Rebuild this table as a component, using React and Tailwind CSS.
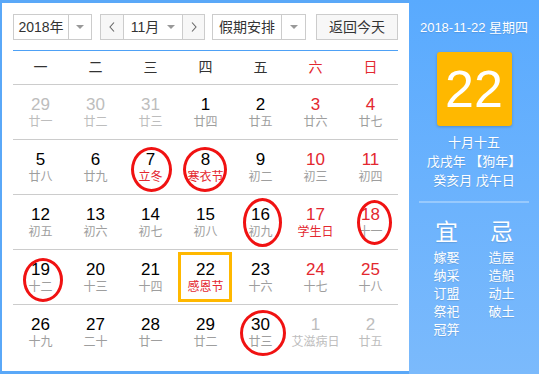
import React from 'react';

const WEEKDAYS = ['一', '二', '三', '四', '五', '六', '日'];

// o: other month, h: festival text, t: today, c: ring annotation {l,t,w,h}
const WEEKS = [
  [
    { d: 29, l: '廿一', o: true },
    { d: 30, l: '廿二', o: true },
    { d: 31, l: '廿三', o: true },
    { d: 1, l: '廿四' },
    { d: 2, l: '廿五' },
    { d: 3, l: '廿六' },
    { d: 4, l: '廿七' },
  ],
  [
    { d: 5, l: '廿八' },
    { d: 6, l: '廿九' },
    { d: 7, l: '立冬', h: true, c: { l: 8, t: 7, w: 41, h: 45 } },
    { d: 8, l: '寒衣节', h: true, c: { l: 5, t: 7, w: 44, h: 45 } },
    { d: 9, l: '初二' },
    { d: 10, l: '初三' },
    { d: 11, l: '初四' },
  ],
  [
    { d: 12, l: '初五' },
    { d: 13, l: '初六' },
    { d: 14, l: '初七' },
    { d: 15, l: '初八' },
    { d: 16, l: '初九', c: { l: 10, t: 3, w: 39, h: 49 } },
    { d: 17, l: '学生日', h: true },
    { d: 18, l: '十一', c: { l: 14, t: 5, w: 35, h: 45 } },
  ],
  [
    { d: 19, l: '十二', c: { l: 10, t: 8, w: 40, h: 44 } },
    { d: 20, l: '十三' },
    { d: 21, l: '十四' },
    { d: 22, l: '感恩节', h: true, t: true },
    { d: 23, l: '十六' },
    { d: 24, l: '十七' },
    { d: 25, l: '十八' },
  ],
  [
    { d: 26, l: '十九' },
    { d: 27, l: '二十' },
    { d: 28, l: '廿一' },
    { d: 29, l: '廿二' },
    { d: 30, l: '廿三', c: { l: 7, t: 5, w: 46, h: 46 } },
    { d: 1, l: '艾滋病日', o: true },
    { d: 2, l: '廿五', o: true },
  ],
];

const GOOD = ['嫁娶', '纳采', '订盟', '祭祀', '冠笄'];
const BAD = ['造屋', '造船', '动土', '破土'];

function Caret() {
  return <span className="block h-0 w-0 border-x-[4px] border-t-[4px] border-x-transparent border-t-[#999]" />;
}

function Chevron({ dir }) {
  return (
    <svg width="6" height="10" viewBox="0 0 6 10" fill="none" stroke="#666" strokeWidth="1.1">
      {dir === 'left' ? <polyline points="5,0.5 1,5 5,9.5" /> : <polyline points="1,0.5 5,5 1,9.5" />}
    </svg>
  );
}

function DayCell({ cell, col }) {
  const weekend = col >= 5;
  let numColor = 'text-black';
  if (cell.o) numColor = 'text-[#bdbdbd]';
  else if (weekend) numColor = 'text-[#e3282f]';
  let lunarColor = 'text-[#9e9e9e]';
  if (cell.o) lunarColor = 'text-[#bdbdbd]';
  else if (cell.h) lunarColor = 'text-[#e3282f]';

  return (
    <div className="relative flex h-[54px] flex-col items-center pt-[11px]">
      <span className={`text-[17px] leading-[18px] ${numColor}`}>{cell.d}</span>
      <span className={`whitespace-nowrap text-[12px] leading-[16px] ${lunarColor}`}>{cell.l}</span>
      {cell.t && (
        <span className="absolute left-0 top-[2px] h-[50px] w-[54px] border-[3px] border-[#ffb800]" />
      )}
      {cell.c && (
        <span
          className="absolute rounded-[50%] border-[3px] border-[#f01212]"
          style={{ left: cell.c.l, top: cell.c.t, width: cell.c.w, height: cell.c.h }}
        />
      )}
    </div>
  );
}

export default function App() {
  return (
    <div
      className="flex h-[374px] w-[539px] overflow-hidden bg-white"
      style={{ fontFamily: '"Liberation Sans", Arial, "Noto Sans CJK SC", sans-serif' }}
    >
      {/* Calendar */}
      <div className="h-full w-[409px] shrink-0 border-b-[3px] border-l-2 border-t-[3px] border-[#5aa8f8] px-[11px] pt-[11px]">
        {/* Controls */}
        <div className="flex h-[26px] text-[14px] text-[#333]">
          <div className="flex w-[79px] border border-[#ccc]">
            <span className="flex flex-1 items-center justify-center">2018年</span>
            <span className="flex w-[23px] items-center justify-center border-l border-[#ccc]">
              <Caret />
            </span>
          </div>
          <div className="ml-[8px] flex w-[105px] border border-[#ccc]">
            <span className="flex w-[22px] items-center justify-center bg-[#f7f7f7]">
              <Chevron dir="left" />
            </span>
            <span className="flex flex-1 items-center justify-center gap-[8px] border-x border-[#ccc]">
              11月 <Caret />
            </span>
            <span className="flex w-[21px] items-center justify-center bg-[#f7f7f7]">
              <Chevron dir="right" />
            </span>
          </div>
          <div className="ml-[7px] flex w-[94px] border border-[#ccc]">
            <span className="flex flex-1 items-center justify-center">假期安排</span>
            <span className="flex w-[24px] items-center justify-center border-l border-[#ccc]">
              <Caret />
            </span>
          </div>
          <button className="ml-[10px] flex w-[82px] items-center justify-center border border-[#ccc] bg-[#f7f7f7]">
            返回今天
          </button>
        </div>

        <div className="mt-[10px] h-px bg-[#4ea1f6]" />

        {/* Weekday header */}
        <div className="grid h-[34px] grid-cols-7 border-b border-[#ccc] text-[14px]">
          {WEEKDAYS.map((w, i) => (
            <span key={w} className={`flex items-center justify-center ${i >= 5 ? 'text-[#e3282f]' : 'text-[#333]'}`}>
              {w}
            </span>
          ))}
        </div>

        {/* Weeks */}
        {WEEKS.map((week, r) => (
          <div key={r} className={`grid grid-cols-7 ${r < WEEKS.length - 1 ? 'border-b border-[#ccc]' : ''}`}>
            {week.map((cell, c) => (
              <DayCell key={c} cell={cell} col={c} />
            ))}
          </div>
        ))}
      </div>

      {/* Side panel */}
      <div className="flex h-full flex-1 flex-col items-center bg-linear-to-b from-[#59aafe] to-[#7bbafc] px-[10px] pt-[20px] text-white [text-shadow:0_1px_1px_rgba(0,0,0,0.12)]">
        <div className="text-[13px] leading-[16px]">2018-11-22 星期四</div>
        <div className="mt-[16px] flex h-[74px] w-[75px] items-center justify-center rounded-[3px] bg-[#ffb800] text-[52px] leading-none shadow-[0_1px_3px_rgba(0,0,0,0.2)] [text-shadow:none]">
          22
        </div>
        <div className="mt-[7px] flex flex-col items-center text-[13px] leading-[19px]">
          <span>十月十五</span>
          <span>戊戌年 【狗年】</span>
          <span>癸亥月 戊午日</span>
        </div>
        <div className="mt-[11px] h-[2px] w-full bg-white/30" />
        <div className="mt-[14px] grid w-full grid-cols-2">
          <div className="flex flex-col items-center">
            <span className="text-[23px] leading-[30px]">宜</span>
            <div className="mt-[2px] flex flex-col text-[13px] leading-[18px]">
              {GOOD.map((g) => (
                <span key={g}>{g}</span>
              ))}
            </div>
          </div>
          <div className="flex flex-col items-center">
            <span className="text-[23px] leading-[30px]">忌</span>
            <div className="mt-[2px] flex flex-col text-[13px] leading-[18px]">
              {BAD.map((g) => (
                <span key={g}>{g}</span>
              ))}
            </div>
          </div>
        </div>
      </div>
    </div>
  );
}
